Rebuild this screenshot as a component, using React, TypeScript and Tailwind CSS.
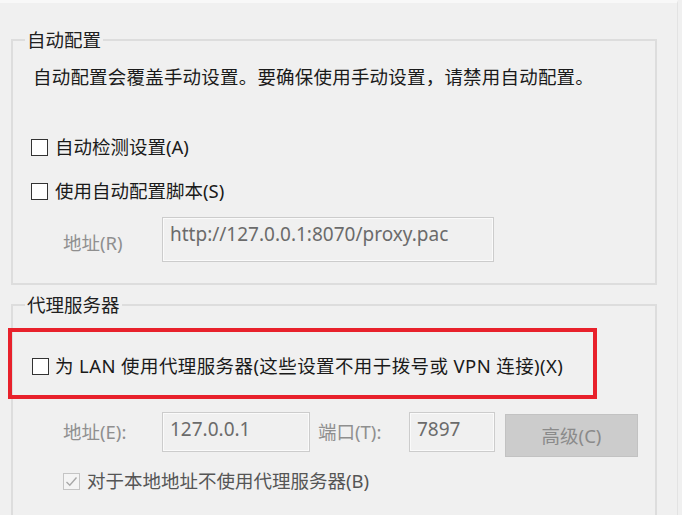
import React from "react";

const font = "font-['Noto_Sans','Noto_Sans_CJK_SC',sans-serif]";

function Box({ checked = false, disabled = false }: { checked?: boolean; disabled?: boolean }) {
  if (disabled) {
    return (
      <div className="w-[17px] h-[17px] flex-shrink-0 border border-[#c4c4c4] bg-[#f4f4f4] flex items-center justify-center">
        {checked && (
          <svg width="13" height="13" viewBox="0 0 13 13">
            <path d="M1.5 7 L4.8 10.3 L11.5 2.5" fill="none" stroke="#a8a8a8" strokeWidth="1.4" />
          </svg>
        )}
      </div>
    );
  }
  return <div className="w-[17px] h-[17px] flex-shrink-0 border-[1.5px] border-[#333333] bg-white" />;
}

function Field({ text, w, h }: { text: string; w: string; h: string }) {
  return (
    <div
      className={`${w} ${h} flex-shrink-0 border border-[#cccccc] shadow-[inset_0_0_0_1px_#fafafa] bg-[#f0f0f0] pl-[7px] pt-[4px] text-[19px] leading-[24px] text-[#6b6b6b]`}
    >
      {text}
    </div>
  );
}

export default function App() {
  return (
    <div className={`w-[682px] h-[515px] bg-[#f0f0f0] overflow-hidden ${font} text-[#1a1a1a]`}>
      <div className="w-[678px] h-full border-r border-[#e3e3e3] border-t-[3px] border-t-[#f8f8f8] pl-[11px] pr-[20px]">
        {/* 自动配置 */}
        <fieldset className="mt-[24px] border-2 border-[#dddddd] pb-[21px]">
          <legend className="ml-[12px] px-[2px] text-[18.5px] leading-[26px] text-[#202020]">自动配置</legend>
          <div className="mt-[11px] pl-[20px] text-[18.5px] leading-[26px] tracking-[0.2px]">
            自动配置会覆盖手动设置。要确保使用手动设置，请禁用自动配置。
          </div>
          <div className="mt-[44px] pl-[18px] h-[26px] flex items-center gap-[7px] text-[18.5px]">
            <Box />
            <span>自动检测设置(A)</span>
          </div>
          <div className="mt-[18px] pl-[18px] h-[26px] flex items-center gap-[7px] text-[18.5px]">
            <Box />
            <span>使用自动配置脚本(S)</span>
          </div>
          <div className="mt-[13px] pl-[50px] flex items-center">
            <span className="w-[99px] pt-[6px] text-[18.5px] text-[#8f8f8f]">地址(R)</span>
            <Field text="http://127.0.0.1:8070/proxy.pac" w="w-[332px]" h="h-[45px]" />
          </div>
        </fieldset>

        {/* 代理服务器 */}
        <fieldset className="mt-[7px] border-2 border-[#dddddd] pb-[40px]">
          <legend className="ml-[12px] px-[2px] text-[18.5px] leading-[26px] text-[#202020]">代理服务器</legend>
          <div className="mt-[10px] ml-[-5px] w-[589px] h-[71px] border-4 border-[#e8212b] pl-[20px] pt-[5px] flex items-center gap-[6px] text-[18.5px]">
            <Box />
            <span className="tracking-[0.4px]">为 LAN 使用代理服务器(这些设置不用于拨号或 VPN 连接)(X)</span>
          </div>
          <div className="mt-[13px] pl-[50px] flex items-start text-[18.5px] text-[#8f8f8f]">
            <span className="w-[99px] h-[40px] flex items-center">地址(E):</span>
            <Field text="127.0.0.1" w="w-[148px]" h="h-[40px]" />
            <span className="ml-[8px] w-[91px] h-[40px] flex items-center">端口(T):</span>
            <Field text="7897" w="w-[86px]" h="h-[40px]" />
            <div className="ml-[10px] mt-[2px] w-[133px] h-[43px] bg-[#cccccc] border border-[#c2c2c2] flex items-center justify-center text-[#8a8a8a]">
              高级(C)
            </div>
          </div>
          <div className="mt-[11px] pl-[50px] h-[26px] flex items-center gap-[7px] text-[18.5px] text-[#555555]">
            <Box checked disabled />
            <span>对于本地地址不使用代理服务器(B)</span>
          </div>
        </fieldset>
      </div>
    </div>
  );
}
